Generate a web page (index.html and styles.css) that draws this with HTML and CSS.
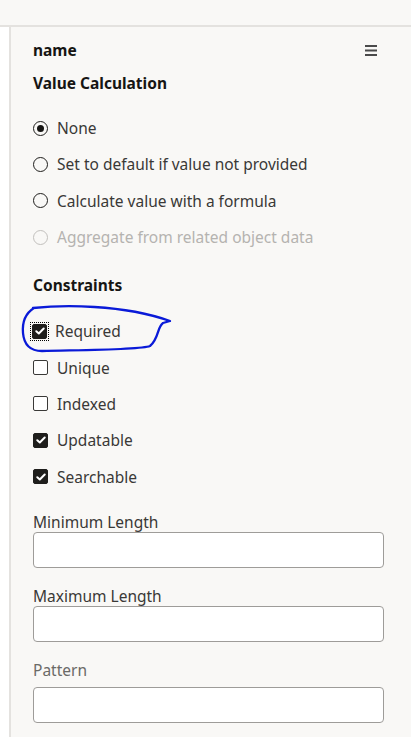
FILE: index.html
```html
<!DOCTYPE html>
<html>
<head>
<meta charset="utf-8">
<link rel="stylesheet" href="styles.css">
</head>
<body>
<div class="topbar"></div>
<div class="main">
  <div class="gutter"></div>
  <div class="panel">
    <div class="head">
      <span class="title">name</span>
      <svg class="menu" width="12" height="11" viewBox="0 0 12 11"><rect x="0" y="0" width="12" height="2" fill="#4a4a4a"/><rect x="0" y="4.5" width="12" height="2" fill="#4a4a4a"/><rect x="0" y="9" width="12" height="2" fill="#4a4a4a"/></svg>
    </div>
    <div class="section-title">Value Calculation</div>
    <div class="options">
      <div class="opt"><span class="radio on"></span><span>None</span></div>
      <div class="opt"><span class="radio"></span><span>Set to default if value not provided</span></div>
      <div class="opt"><span class="radio"></span><span>Calculate value with a formula</span></div>
      <div class="opt disabled"><span class="radio"></span><span>Aggregate from related object data</span></div>
    </div>
    <div class="section-title constraints">Constraints</div>
    <div class="checks">
      <div class="opt chk-req">
        <span class="focus"><span class="check on"><svg width="10" height="8" viewBox="0 0 10 8"><path d="M1.3 4.2 L3.8 6.5 L8.7 1.5" fill="none" stroke="#fff" stroke-width="2" stroke-linecap="round" stroke-linejoin="round"/></svg></span></span>
        <span>Required</span>
        <svg class="scribble" width="152" height="52" viewBox="-2 -2 152 52"><path d="M11 3 C40 0 100 -1 148 16 L141 18 C135 22 137 34 128 41 C118 45 60 45 20 46 C8 46 2 40 1 28 C0 16 4 8 12 3" fill="none" stroke="#0a1ad8" stroke-width="2.3" stroke-linecap="round" stroke-linejoin="round"/></svg>
      </div>
      <div class="opt"><span class="check"></span><span>Unique</span></div>
      <div class="opt"><span class="check"></span><span>Indexed</span></div>
      <div class="opt"><span class="check on"><svg width="10" height="8" viewBox="0 0 10 8"><path d="M1.3 4.2 L3.8 6.5 L8.7 1.5" fill="none" stroke="#fff" stroke-width="2" stroke-linecap="round" stroke-linejoin="round"/></svg></span><span>Updatable</span></div>
      <div class="opt"><span class="check on"><svg width="10" height="8" viewBox="0 0 10 8"><path d="M1.3 4.2 L3.8 6.5 L8.7 1.5" fill="none" stroke="#fff" stroke-width="2" stroke-linecap="round" stroke-linejoin="round"/></svg></span><span>Searchable</span></div>
    </div>
    <div class="field first">
      <label>Minimum Length</label>
      <div class="input"></div>
    </div>
    <div class="field">
      <label>Maximum Length</label>
      <div class="input"></div>
    </div>
    <div class="field pattern">
      <label>Pattern</label>
      <div class="input"></div>
    </div>
  </div>
</div>
</body>
</html>
```
FILE: styles.css
```css
* { box-sizing: border-box; }
html, body { margin: 0; padding: 0; }
body {
  width: 411px;
  height: 737px;
  overflow: hidden;
  background: #f9f8f6;
  font-family: "Noto Sans", "Open Sans", sans-serif;
  color: #161513;
}
.topbar {
  height: 27px;
  background: #f9f8f6;
  border-bottom: 2px solid #e4e2df;
}
.main {
  display: flex;
  height: 710px;
}
.gutter {
  width: 11px;
  background: #fff;
  border-right: 2px solid #e4e2df;
  flex: none;
}
.panel {
  flex: 1;
  padding: 12px 27px 0 22px;
  background: #f9f8f6;
}
.head {
  display: flex;
  justify-content: space-between;
  align-items: center;
  height: 22px;
}
.title {
  font-size: 15.5px;
  font-weight: 700;
}
.menu { margin-right: 7px; }
.section-title {
  font-size: 15.5px;
  font-weight: 700;
  margin-top: 11px;
  line-height: 22px;
}
.options { margin-top: 16px; }
.opt {
  display: flex;
  align-items: center;
  gap: 9px;
  height: 36.3px;
  font-size: 15.5px;
  color: #3a3937;
  position: relative;
}
.opt.disabled { color: #b5b3b0; }
.radio {
  width: 15px;
  height: 15px;
  border: 1.5px solid #1f1e1c;
  border-radius: 50%;
  flex: none;
  display: flex;
  align-items: center;
  justify-content: center;
}
.radio.on::after {
  content: "";
  width: 7px;
  height: 7px;
  background: #161513;
  border-radius: 50%;
}
.disabled .radio { border-color: #c2c0bd; }
.constraints { margin-top: 19px; }
.checks { margin-top: 17px; }
.check {
  width: 15px;
  height: 15px;
  border: 1.5px solid #3a3937;
  border-radius: 2px;
  flex: none;
  display: flex;
  align-items: center;
  justify-content: center;
  background: #fff;
}
.check.on {
  background: #1f1e1c;
  border-color: #1f1e1c;
}
.focus {
  display: flex;
  padding: 1px;
  outline: 1px dotted #000;
  margin: -2px;
}
.scribble {
  position: absolute;
  left: -13px;
  top: -10px;
  pointer-events: none;
}
.field { margin-top: 19px; }
.field.first { margin-top: 18px; }
.field label {
  display: block;
  font-size: 15.5px;
  color: #3a3937;
  line-height: 19px;
}
.field .input {
  height: 36px;
  background: #fff;
  border: 1px solid #9e9c99;
  border-radius: 4px;
}
.field.pattern { margin-top: 19px; }
.pattern label { color: #6b6a67; margin-bottom: 7px; }
```
